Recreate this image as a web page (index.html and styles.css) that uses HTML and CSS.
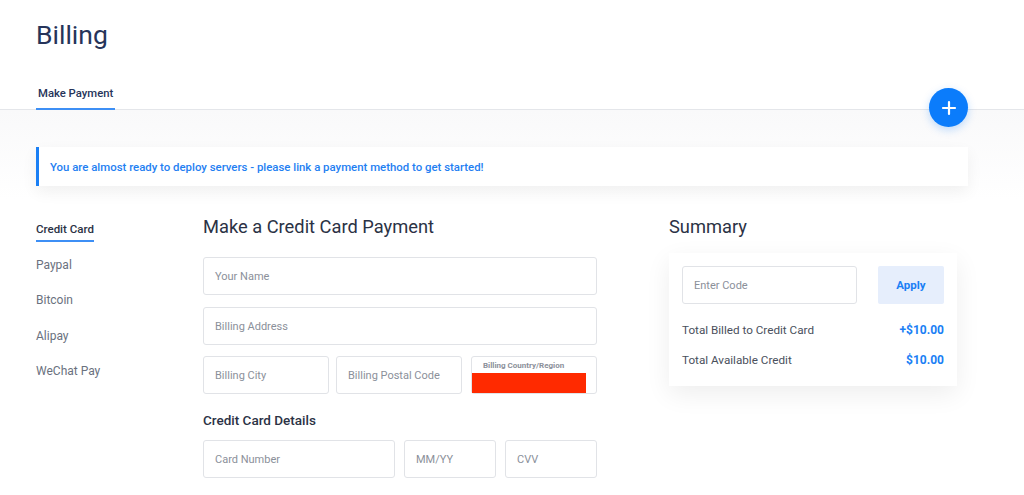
FILE: index.html
```html
<!DOCTYPE html>
<html>
<head>
<meta charset="utf-8">
<link rel="stylesheet" href="styles.css">
</head>
<body>
<header class="page-header">
  <h1 class="title">Billing</h1>
  <nav class="tabs">
    <a class="tab active">Make Payment</a>
  </nav>
  <button class="fab" aria-label="Add">
    <svg width="16" height="16" viewBox="0 0 16 16"><path d="M8 2v12M2 8h12" stroke="#fff" stroke-width="2.2" stroke-linecap="round"/></svg>
  </button>
</header>
<main class="content">
  <div class="alert">You are almost ready to deploy servers - please link a payment method to get started!</div>
  <div class="columns">
    <ul class="methods">
      <li class="method active"><span>Credit Card</span></li>
      <li class="method"><span>Paypal</span></li>
      <li class="method"><span>Bitcoin</span></li>
      <li class="method"><span>Alipay</span></li>
      <li class="method"><span>WeChat Pay</span></li>
    </ul>
    <section class="form">
      <h2 class="section-title">Make a Credit Card Payment</h2>
      <div class="field">Your Name</div>
      <div class="field">Billing Address</div>
      <div class="row three">
        <div class="field">Billing City</div>
        <div class="field">Billing Postal Code</div>
        <div class="field select">
          <span class="select-label">Billing Country/Region</span>
          <span class="redact"></span>
        </div>
      </div>
      <h3 class="sub-title">Credit Card Details</h3>
      <div class="row card">
        <div class="field">Card Number</div>
        <div class="field">MM/YY</div>
        <div class="field">CVV</div>
      </div>
    </section>
    <aside class="summary">
      <h2 class="section-title">Summary</h2>
      <div class="summary-card">
        <div class="code-row">
          <div class="field code">Enter Code</div>
          <button class="apply">Apply</button>
        </div>
        <div class="total"><span>Total Billed to Credit Card</span><span class="amount">+$10.00</span></div>
        <div class="total"><span>Total Available Credit</span><span class="amount">$10.00</span></div>
      </div>
    </aside>
  </div>
</main>
</body>
</html>
```
FILE: styles.css
```css
* { box-sizing: border-box; }
html, body { margin: 0; padding: 0; }
body {
  font-family: Roboto, "Liberation Sans", Arial, sans-serif;
  background: #fff;
  color: #2b3245;
  width: 1024px;
  height: 495px;
  overflow: hidden;
  position: relative;
}
.page-header {
  position: relative;
  padding-top: 15px;
}
.title {
  margin: 0 0 0 36px;
  font-size: 26.5px;
  line-height: 40px;
  font-weight: 400;
  color: #26345a;
}
.tabs {
  margin-top: 31px;
  padding-left: 36px;
  border-bottom: 1px solid #e4e6ea;
  display: flex;
}
.tab {
  display: block;
  padding: 0 2px 7px 2px;
  font-size: 11.3px;
  line-height: 15px;
  font-weight: 500;
  color: #26345a;
  border-bottom: 2px solid #3d8ff5;
  margin-bottom: -1px;
}
.fab {
  position: absolute;
  left: 929px;
  top: 88px;
  width: 39px;
  height: 39px;
  border-radius: 50%;
  border: 0;
  background: #0b7cfb;
  display: flex;
  align-items: center;
  justify-content: center;
  box-shadow: 0 3px 8px rgba(11, 124, 251, 0.25);
  padding: 0;
}
.content {
  padding: 37px 56px 0 36px;
  background: linear-gradient(#f9f9fa, #fff 90px);
}
.alert {
  background: #fff;
  border-left: 3px solid #1a7ff5;
  height: 39px;
  display: flex;
  align-items: center;
  padding-left: 11px;
  font-size: 11.4px;
  font-weight: 500;
  color: #1f80f2;
  box-shadow: 0 6px 16px rgba(0, 0, 0, 0.06);
}
.columns {
  display: flex;
  margin-top: 36px;
}
.methods {
  list-style: none;
  margin: 0;
  padding: 0;
  width: 167px;
  flex: none;
}
.method {
  font-size: 12px;
  line-height: 15px;
  height: 35.5px;
  color: #6a717e;
  font-weight: 400;
}
.method span { display: inline-block; padding-bottom: 3px; }
.method.active span {
  color: #2b3245;
  font-weight: 500;
  font-size: 11.5px;
  border-bottom: 2px solid #3d8ff5;
}
.form {
  width: 394px;
  flex: none;
}
.section-title {
  margin: 0;
  font-size: 18.3px;
  line-height: 24px;
  font-weight: 400;
  color: #2b3245;
  margin-top: -7px;
}
.field {
  height: 38px;
  border: 1px solid #e1e3e7;
  border-radius: 3px;
  background: #fff;
  display: flex;
  align-items: center;
  padding-left: 11px;
  font-size: 11px;
  color: #8b909a;
  margin-top: 12px;
}
.form .section-title + .field { margin-top: 18px; }
.row { display: flex; }
.row.three { gap: 7px; margin-top: 11px; }
.row.three .field { margin-top: 0; flex: 126px 0 0; }
.row.three .field:nth-child(2) { margin-right: 2px; }
.field.select {
  flex-direction: column;
  align-items: flex-start;
  justify-content: flex-start;
  padding: 0;
}
.select-label {
  font-size: 8px;
  font-weight: 700;
  color: #8b909a;
  margin: 4px 0 0 11px;
  line-height: 10px;
}
.redact {
  display: block;
  width: 114px;
  height: 21px;
  background: #ff2a00;
  margin-top: 2px;
  margin-left: 0;
}
.sub-title {
  margin: 18px 0 0 0;
  font-size: 13.5px;
  line-height: 17px;
  font-weight: 500;
  color: #2b3245;
}
.row.card { margin-top: 11px; gap: 9px; }
.row.card .field { margin-top: 0; }
.row.card .field:nth-child(1) { width: 192px; }
.row.card .field:nth-child(2) { width: 92px; }
.row.card .field:nth-child(3) { width: 92px; }
.summary {
  margin-left: 72px;
  width: 288px;
  flex: none;
}
.summary-card {
  margin-top: 14px;
  background: #fff;
  padding: 13px 13px 18px 13px;
  box-shadow: 0 8px 24px rgba(0, 0, 0, 0.07);
}
.code-row {
  display: flex;
  justify-content: space-between;
}
.field.code { margin-top: 0; width: 175px; }
.apply {
  width: 66px;
  height: 38px;
  border: 0;
  border-radius: 2px;
  background: #e6eefc;
  color: #1a7ff5;
  font-family: inherit;
  font-size: 11.5px;
  font-weight: 700;
  padding: 0;
}
.total {
  display: flex;
  justify-content: space-between;
  font-size: 11.7px;
  line-height: 15px;
  color: #4a505c;
  font-weight: 400;
  margin-top: 19px;
}
.total + .total { margin-top: 15px; }
.amount { color: #1a7ff5; font-weight: 700; font-size: 12px; }
```
